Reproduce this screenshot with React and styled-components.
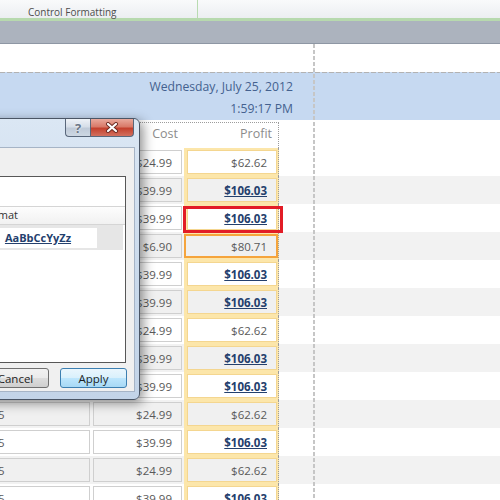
import React from "react";
import styled, { createGlobalStyle, css } from "styled-components";

const GlobalStyle = createGlobalStyle`
  html, body {
    margin: 0;
    padding: 0;
  }
  body {
    width: 500px;
    height: 500px;
    overflow: hidden;
    background: #fff;
    font-family: "Open Sans", "Noto Sans", sans-serif;
  }
`;

const Screen = styled.div`
  position: relative;
  width: 500px;
  height: 500px;
  overflow: hidden;
  display: flex;
  flex-direction: column;
`;

/* ribbon */
const Ribbon = styled.div`
  height: 18px;
  flex-shrink: 0;
  display: flex;
  background: linear-gradient(#f9fafb, #eceef1);
  border-bottom: 3px solid #b7d9ae;
`;

const RibbonGroup = styled.div`
  width: 198px;
  border-right: 1px solid #b9dbb1;
  display: flex;
  align-items: flex-end;
  padding: 0 0 0 28px;
  box-sizing: border-box;
  font-size: 10px;
  color: #4d4d4d;
  line-height: 12px;
`;

const GrayBar = styled.div`
  height: 22px;
  flex-shrink: 0;
  background: #acb3be;
  border-bottom: 1px solid #8e97a4;
`;

/* report canvas */
const Canvas = styled.div`
  position: relative;
  flex: 1;
  background: #fff;

  &::after {
    content: "";
    position: absolute;
    left: 313px;
    top: 0;
    bottom: 0;
    width: 2px;
    background: repeating-linear-gradient(
      180deg,
      #c6c6c6 0 4px,
      transparent 4px 6px
    );
  }
`;

const PageHead = styled.div`
  height: 28px;
`;

const Banner = styled.div`
  height: 48px;
  background: repeating-linear-gradient(90deg, #b2b2b2 0 5px, transparent 5px 7px)
      top / 100% 1px no-repeat,
    #c6d9f1;
`;

const DateBlock = styled.div`
  width: 314px;
  box-sizing: border-box;
  padding: 4px 21px 0 0;
  text-align: right;
  font-size: 12.2px;
  line-height: 22px;
  color: #44618f;
`;

const HeaderRow = styled.div`
  display: flex;
  margin-top: 2px;
  height: 26px;
  width: 279px;
  box-sizing: border-box;
  border-top: 1px dotted #9c9c9c;
`;

const HeaderLabel = styled.div`
  width: ${({ w }) => w}px;
  box-sizing: border-box;
  text-align: right;
  padding-right: ${({ pr }) => pr}px;
  font-size: 12.5px;
  line-height: 22px;
  color: #8c8c8c;
  ${({ edge }) =>
    edge &&
    css`
      border-right: 1px dotted #9c9c9c;
    `}
`;

const Row = styled.div`
  display: flex;
  height: 28px;
  background: ${({ shade }) => (shade ? "#f2f2f2" : "#fff")};
`;

const Slot = styled.div`
  width: ${({ w }) => w}px;
  box-sizing: border-box;
  padding: 2px ${({ pr }) => pr}px 2px ${({ pl }) => pl}px;
  display: flex;
  ${({ accent }) =>
    accent &&
    css`
      background: #fce6aa;
      border-right: 1px dotted #9c9c9c;
    `}
`;

const Box = styled.div`
  flex: 1;
  box-sizing: border-box;
  border: 1px solid ${({ accent }) => (accent ? "#f4d690" : "#cfcfcf")};
  border-left: ${({ open }) => (open ? "none" : undefined)};
  background: ${({ shade }) => (shade ? "#f0f0f0" : "#fff")};
  display: flex;
  align-items: center;
  justify-content: ${({ left }) => (left ? "flex-start" : "flex-end")};
  padding: 0 9px 0 0;
  font-size: 11.5px;
  color: #595959;
  white-space: nowrap;
  overflow: hidden;
  ${({ focus }) =>
    focus &&
    css`
      border: 2px solid #f5a43c;
      margin: 0 -1px 0 -3px;
      padding-right: 9px;
    `}
`;

const FirstText = styled.span`
  margin-left: -2px;
`;

const Money = styled.span`
  ${({ strong }) =>
    strong &&
    css`
      font-weight: 700;
      color: #24406d;
      text-decoration: underline;
    `}
`;

const Marker = styled.div`
  position: absolute;
  left: 183px;
  top: 162px;
  width: 100px;
  height: 27px;
  box-sizing: border-box;
  border: 3px solid #e21c26;
`;

/* dialog */
const Dialog = styled.div`
  position: absolute;
  left: -220px;
  top: 118px;
  width: 360px;
  height: 282px;
  box-sizing: border-box;
  border: 1px solid #4a5565;
  border-radius: 6px;
  background: linear-gradient(180deg, #dbe7f4, #c9d9eb 60%, #c3d4e8);
  box-shadow: 3px 3px 12px rgba(0, 0, 0, 0.45);
  display: flex;
  flex-direction: column;
  padding: 0 4px 7px 5px;
  z-index: 2;
`;

const TitleBar = styled.div`
  height: 28px;
  flex-shrink: 0;
  display: flex;
  justify-content: flex-end;
  align-items: flex-start;
  padding-right: 1px;
`;

const CaptionButton = styled.div`
  height: 18px;
  box-sizing: border-box;
  border: 1px solid #59677b;
  border-top: none;
  display: flex;
  align-items: center;
  justify-content: center;
  ${({ kind }) =>
    kind === "close"
      ? css`
          width: 44px;
          border-radius: 0 0 4px 0;
          background: linear-gradient(
            180deg,
            #e9a99c 0%,
            #d97a69 45%,
            #c4412e 55%,
            #d2705f 100%
          );
        `
      : css`
          width: 25px;
          border-right: none;
          border-radius: 0 0 0 4px;
          background: linear-gradient(
            180deg,
            #eef2f7 0%,
            #d6dee8 45%,
            #bfcad8 55%,
            #cdd7e3 100%
          );
          font-size: 13px;
          font-weight: 700;
          color: #6a7686;
          text-shadow: 0 0 2px #fff;
        `}
`;

const Client = styled.div`
  flex: 1;
  background: #f0f0f0;
  border: 1px solid #a6b4c6;
  display: flex;
  flex-direction: column;
  padding: 28px 8px 0 6px;
`;

const ListBox = styled.div`
  height: 187px;
  box-sizing: border-box;
  border: 1px solid #575757;
  background: #fff;
  padding-top: 29px;
`;

const ListHeader = styled.div`
  display: flex;
  height: 17px;
  border-top: 1px solid #d5d5d5;
  border-bottom: 1px solid #d5d5d5;
  background: linear-gradient(#fdfdfd, #f1f1f1);
  font-size: 11px;
  color: #333;
  line-height: 16px;
`;

const HeadCell = styled.div`
  width: ${({ w }) => w}px;
  padding-left: 4px;
  box-sizing: border-box;
  white-space: nowrap;
  overflow: hidden;
  ${({ divide }) =>
    divide &&
    css`
      border-right: 1px solid #dcdcdc;
    `}
`;

const RuleRow = styled.div`
  display: flex;
  height: 25px;
  margin-right: 2px;
  background: #e6e6e6;
  align-items: center;
  font-size: 11px;
  color: #333;
`;

const RuleText = styled.div`
  width: 185px;
  padding-left: 4px;
  box-sizing: border-box;
  white-space: nowrap;
`;

const Sample = styled.div`
  width: 118px;
  height: 20px;
  background: #fff;
  display: flex;
  align-items: center;
  justify-content: center;
  font-size: 11px;
  font-weight: 700;
  color: #24406d;
  text-decoration: underline;
`;

const ButtonRow = styled.div`
  display: flex;
  justify-content: flex-end;
  gap: 11px;
  margin-top: 5px;
  margin-right: -1px;
`;

const DialogButton = styled.div`
  width: 67px;
  height: 20px;
  box-sizing: border-box;
  border-radius: 3px;
  display: flex;
  align-items: center;
  justify-content: center;
  font-size: 11.5px;
  color: #1e1e1e;
  ${({ primary }) =>
    primary
      ? css`
          border: 1px solid #3c7fb1;
          background: linear-gradient(
            180deg,
            #eaf6fd 0%,
            #d9f0fc 50%,
            #bee6fd 50%,
            #a7d9f5 100%
          );
        `
      : css`
          border: 1px solid #707070;
          background: linear-gradient(
            180deg,
            #f2f2f2 0%,
            #ebebeb 50%,
            #dddddd 50%,
            #cfcfcf 100%
          );
        `}
`;

const CloseGlyph = () => (
  <svg width="14" height="11" viewBox="0 0 14 11">
    <path
      d="M3 2 L11 9 M11 2 L3 9"
      stroke="#6b2a22"
      strokeWidth="4"
      strokeLinecap="round"
      fill="none"
    />
    <path
      d="M3 2 L11 9 M11 2 L3 9"
      stroke="#fff"
      strokeWidth="2.2"
      strokeLinecap="round"
      fill="none"
    />
  </svg>
);

// first column only shows where the dialog doesn't cover it
const rows = [
  { cost: "$24.99", profit: "$62.62" },
  { cost: "$39.99", profit: "$106.03", strong: true },
  { cost: "$39.99", profit: "$106.03", strong: true },
  { cost: "$6.90", profit: "$80.71", focus: true },
  { cost: "$39.99", profit: "$106.03", strong: true },
  { cost: "$39.99", profit: "$106.03", strong: true },
  { cost: "$24.99", profit: "$62.62" },
  { cost: "$39.99", profit: "$106.03", strong: true },
  { cost: "$39.99", profit: "$106.03", strong: true },
  { first: "5", cost: "$24.99", profit: "$62.62" },
  { first: "5", cost: "$39.99", profit: "$106.03", strong: true },
  { first: "5", cost: "$24.99", profit: "$62.62" },
  { first: "5", cost: "$39.99", profit: "$106.03", strong: true },
];

export default function App() {
  return (
    <>
      <GlobalStyle />
      <Screen>
        <Ribbon>
          <RibbonGroup>Control Formatting</RibbonGroup>
        </Ribbon>
        <GrayBar />
        <Canvas>
          <PageHead />
          <Banner>
            <DateBlock>
              <div>Wednesday, July 25, 2012</div>
              <div>1:59:17 PM</div>
            </DateBlock>
          </Banner>
          <HeaderRow>
            <HeaderLabel w={92} pr={0} />
            <HeaderLabel w={92} pr={6}>
              Cost
            </HeaderLabel>
            <HeaderLabel w={95} pr={6} edge>
              Profit
            </HeaderLabel>
          </HeaderRow>
          {rows.map((r, i) => {
            const shade = i % 2 === 1;
            return (
              <Row key={i} shade={shade}>
                <Slot w={92} pl={0} pr={2}>
                  <Box shade={shade} open left>
                    {r.first && <FirstText>{r.first}</FirstText>}
                  </Box>
                </Slot>
                <Slot w={92} pl={1} pr={2}>
                  <Box shade={shade}>{r.cost}</Box>
                </Slot>
                <Slot w={95} pl={3} pr={1} accent>
                  <Box shade={shade} accent focus={r.focus}>
                    <Money strong={r.strong}>{r.profit}</Money>
                  </Box>
                </Slot>
              </Row>
            );
          })}
          <Marker />
        </Canvas>

        <Dialog>
          <TitleBar>
            <CaptionButton kind="help">?</CaptionButton>
            <CaptionButton kind="close">
              <CloseGlyph />
            </CaptionButton>
          </TitleBar>
          <Client>
            <ListBox>
              <ListHeader>
                <HeadCell w={183} divide>
                  Rule (applied in order shown)
                </HeadCell>
                <HeadCell w={140}>Format</HeadCell>
              </ListHeader>
              <RuleRow>
                <RuleText>Value = 106.03</RuleText>
                <Sample>AaBbCcYyZz</Sample>
              </RuleRow>
            </ListBox>
            <ButtonRow>
              <DialogButton>OK</DialogButton>
              <DialogButton>Cancel</DialogButton>
              <DialogButton primary>Apply</DialogButton>
            </ButtonRow>
          </Client>
        </Dialog>
      </Screen>
    </>
  );
}
